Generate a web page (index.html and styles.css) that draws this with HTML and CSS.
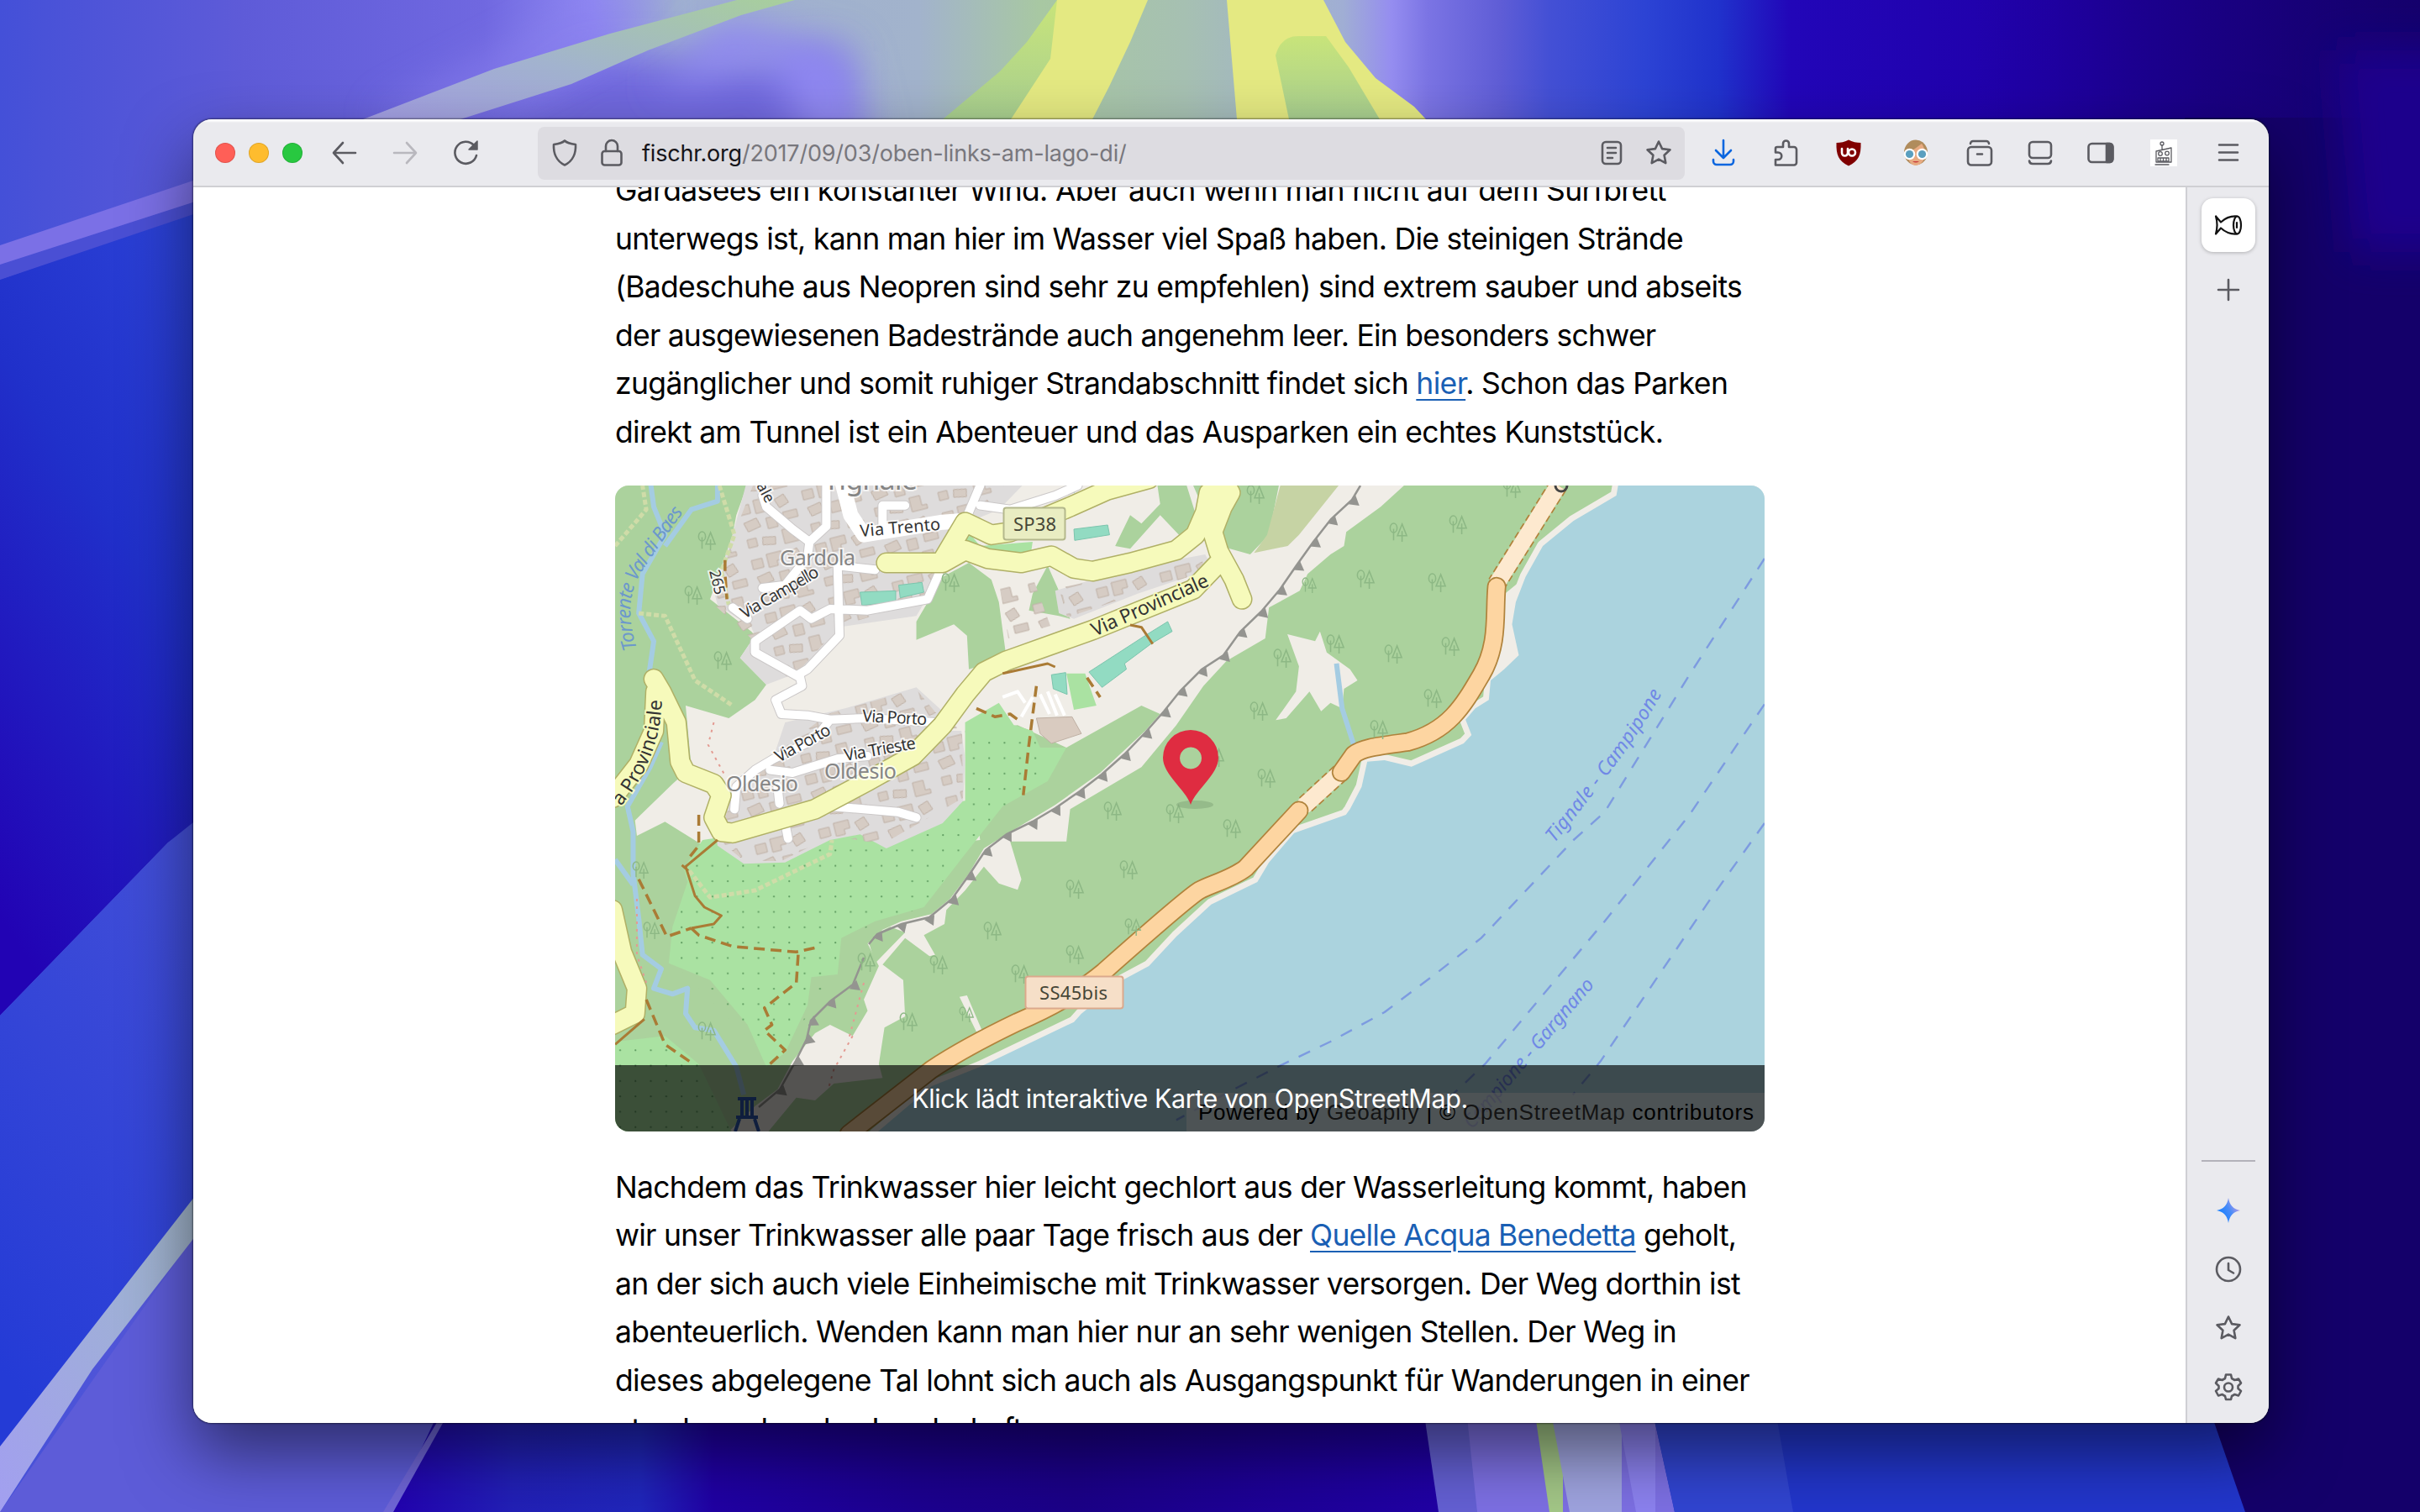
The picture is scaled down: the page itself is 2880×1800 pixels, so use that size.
FILE: index.html
```html
<!DOCTYPE html>
<html lang="de">
<head>
<meta charset="utf-8">
<title>Oben links am Lago di Garda</title>
<link rel="stylesheet" href="styles.css">
</head>
<body>
<svg class="wallpaper" viewBox="0 0 2880 1800" aria-hidden="true">
  <defs>
    <linearGradient id="wTop" x1="0" x2="2880" y1="0" y2="0" gradientUnits="userSpaceOnUse">
      <stop offset="0" stop-color="#4450d8"/><stop offset=".1" stop-color="#5e5bd8"/><stop offset=".2" stop-color="#7068e0"/><stop offset=".245" stop-color="#8f88f2"/><stop offset=".28" stop-color="#9fb0d0"/><stop offset=".38" stop-color="#a2b3cc"/><stop offset=".43" stop-color="#a8c8a2"/><stop offset=".49" stop-color="#a6c0b2"/><stop offset=".555" stop-color="#a0aed4"/><stop offset=".575" stop-color="#958df0"/><stop offset=".59" stop-color="#7b74e4"/><stop offset=".62" stop-color="#5f5dd6"/><stop offset=".64" stop-color="#4450d5"/><stop offset=".68" stop-color="#2c43d4"/><stop offset=".71" stop-color="#2032cc"/><stop offset=".74" stop-color="#2206b8"/><stop offset=".85" stop-color="#2000a8"/><stop offset="1" stop-color="#180078"/>
    </linearGradient>
    <linearGradient id="wRight" x1="0" x2="1" y1="0" y2="0"><stop offset="0" stop-color="#16006c" stop-opacity="0"/><stop offset=".7" stop-color="#14006a" stop-opacity=".9"/><stop offset="1" stop-color="#120064"/></linearGradient>
    <linearGradient id="wBlue" x1=".7" y1="0" x2=".3" y2="1"><stop offset="0" stop-color="#2b41d6"/><stop offset=".4" stop-color="#2030ca"/><stop offset="1" stop-color="#2203b4"/></linearGradient>
    <linearGradient id="wBlue2" x1=".7" y1="0" x2=".3" y2="1"><stop offset="0" stop-color="#434fd8"/><stop offset="1" stop-color="#243bd6"/></linearGradient>
    <linearGradient id="wRay" x1="0" y1="1" x2="1" y2="0"><stop offset="0" stop-color="#a49fe6"/><stop offset=".45" stop-color="#a2b3ce"/><stop offset="1" stop-color="#a8cf9c"/></linearGradient>
    <linearGradient id="wStripe" x1="0" y1="1" x2="1" y2="0"><stop offset="0" stop-color="#a29ff0"/><stop offset=".6" stop-color="#9fb0d6"/><stop offset="1" stop-color="#a0b5c4"/></linearGradient>
    <linearGradient id="wDark" x1="460" x2="1720" y1="0" y2="0" gradientUnits="userSpaceOnUse"><stop offset="0" stop-color="#2200b0"/><stop offset=".12" stop-color="#2220b8"/><stop offset=".24" stop-color="#2026bc"/><stop offset=".31" stop-color="#2000a4"/><stop offset=".5" stop-color="#1c0090"/><stop offset=".65" stop-color="#1b0088"/><stop offset="1" stop-color="#2000a6"/></linearGradient>
    <linearGradient id="wGreen" x1="0" x2="0" y1="0" y2="1"><stop offset="0" stop-color="#c8e47a"/><stop offset="1" stop-color="#a8cf90"/></linearGradient>
    <filter id="soft" x="-30%" y="-60%" width="160%" height="220%"><feGaussianBlur stdDeviation="24"/></filter>
  </defs>
  <rect width="2880" height="1800" fill="url(#wTop)"/>
  <path filter="url(#soft)" fill="#7068de" d="M560 180L700 70 960 70 1000 60 1000 220 560 220z"/>
  <path filter="url(#soft)" fill="#9088f2" d="M860 20L1010 60 1040 180 960 180 920 70 780 110z"/>
  <path filter="url(#soft)" fill="#8a80ee" opacity=".7" d="M440 142L700 10 800 0 700 60 520 142z"/>
  <rect x="2350" y="0" width="530" height="150" fill="url(#wRight)" opacity=".6"/>
  <rect x="2600" y="140" width="280" height="1660" fill="#14006a"/>
  <path filter="url(#soft)" fill="#1c008c" d="M2780 60H2960V300H2800z"/>
  <path fill="#2438cf" d="M0 333L260 243V1000H0z"/>
  <path fill="url(#wBlue)" d="M0 333L260 243V960L200 1003 0 1209z"/>
  <path fill="#4a4fd4" d="M0 315L260 231V245L0 333z"/>
  <path fill="#7b70e6" d="M0 292L260 205V231L0 315z"/>
  <path fill="url(#wBlue2)" d="M0 1209L200 1003 260 955V1400L0 1722z"/>
  <path fill="#5d5cd8" d="M0 1800L260 1430 560 1600 527 1693 466 1800z"/>
  <path fill="url(#wStripe)" d="M0 1722L260 1388V1436L110 1630 0 1800z"/>
  <path fill="url(#wDark)" d="M560 1600H1720V1800H466z"/>
  <path fill="#6f66d8" d="M540 1660H546L468 1800H456z"/>
  <path fill="#6460d4" d="M1690 1650H2000V1800H1712z"/>
  <path fill="#7d70e4" d="M1742 1650H2000V1800H1758z"/>
  <path fill="#a4c888" d="M1822 1650H1860V1800H1844z"/>
  <path fill="#9fa4e0" d="M1840 1650H1930V1800H1868z"/>
  <path fill="#8c82f0" d="M1919 1650H1970V1800H1947z"/>
  <path fill="#2236cc" d="M1960 1650H2620L2672 1800H1993z"/>
  <path fill="#3145d2" d="M1960 1650H2108L2134 1800H1993z"/>
  <path fill="url(#wRay)" d="M877 0H946L882 18 771 60 680 100 548 142H432L588 82 726 40z"/>
  <path fill="url(#wGreen)" d="M1258 0L1222 50 1190 85 1122 142H1240L1290 0z"/>
  <path fill="#e4e982" d="M1258 0H1366L1345 50 1320 103 1300 142H1203L1250 70z"/>
  <path fill="#e4e982" d="M1460 0H1575L1601 50 1637 93 1683 127 1697 142H1472z"/>
  <path fill="url(#wGreen)" d="M1518 66Q1524 43 1545 43H1578L1605 80 1642 142H1534z"/>
</svg>

<main class="window">
  <header class="toolbar">
    <div class="lights"><i class="red"></i><i class="amber"></i><i class="green"></i></div>
    <svg class="icon" viewBox="0 0 32 32"><path d="M29 16H3M14 4L3 16l11 12"/></svg>
    <svg class="icon faded" viewBox="0 0 32 32"><path d="M3 16h26M18 4l11 12-11 12"/></svg>
    <svg class="icon" viewBox="0 0 32 32"><path d="M28 19A13 13 0 1 1 25 7"/><path class="solid" stroke-width="1.500" d="M29 2v10H19z"/></svg>
    <div class="address">
      <svg class="icon" viewBox="0 0 32 32"><path d="M16 1.500C13 4.500 7 5.500 3 6c-.5 10 3 20 13 24.500C26 26 29.500 16 29 6 25 5.500 19 4.500 16 1.500z"/></svg>
      <svg class="icon" viewBox="0 0 32 32"><rect x="4.500" y="14" width="23" height="16.500" rx="3"/><path d="M9 14V8a7 7 0 0 1 14 0v6"/></svg>
      <span class="url"><b>fischr.org</b>/2017/09/03/oben-links-am-lago-di/</span>
      <svg class="icon reader" viewBox="0 0 32 32"><rect x="5" y="3" width="22" height="26" rx="4"/><path d="M11 10h10M11 16h10M11 22h6"/></svg>
      <svg class="icon" viewBox="0 0 32 32"><path d="M16 2.500l4.100 8.600 9.400 1.200-6.900 6.500 1.700 9.300L16 23.600l-8.300 4.500 1.700-9.300-6.900-6.500 9.400-1.200z"/></svg>
    </div>
    <svg class="icon blue" viewBox="0 0 32 32"><path d="M16 1v20M7 13l9 9 9-9M4 24v2a4 4 0 0 0 4 4h16a4 4 0 0 0 4-4v-2"/></svg>
    <svg class="icon" viewBox="0 0 32 32"><path d="M4 30.500V24h3a4 4 0 0 0 0-8.500H4V11a2 2 0 0 1 2-2h7V5a3.500 3.500 0 0 1 7 0v4h6a3 3 0 0 1 3 3v15.500a3 3 0 0 1-3 3z"/></svg>
    <svg class="icon" viewBox="0 0 32 32"><path fill="#800000" stroke="none" d="M16 .5C12 3 6 4 1.500 4 1 18 4 26 16 31.500 28 26 31 18 30.500 4 26 4 20 3 16 .5z"/><path stroke="#fff" stroke-width="2.600" d="M8 11v5a3.500 3.500 0 0 0 7 0v-5"/><circle cx="20" cy="15.500" r="4" stroke="#fff" stroke-width="2.600"/></svg>
    <svg class="icon" viewBox="0 0 32 32"><g stroke="none"><ellipse cx="16" cy="15.500" rx="14" ry="15" fill="#b08c5c"/><path fill="#e8ab82" d="M6 16Q16 11 23 5q4 5 3.500 13c0 8-5 13-10.500 13S6 25 6 16z"/><circle cx="8.500" cy="17.500" r="6.800" fill="#fff"/><circle cx="23.500" cy="17.500" r="6.800" fill="#fff"/><circle cx="8.500" cy="17.500" r="4.600" fill="#5a9fbf"/><circle cx="23.500" cy="17.500" r="4.600" fill="#5a9fbf"/><path fill="#c83c3c" d="M12 26h8q-4 3-8 0z"/></g></svg>
    <svg class="icon" viewBox="0 0 32 32"><rect x="2" y="9" width="28" height="21.500" rx="4"/><path d="M5 5a3 3 0 0 1 3-3h16a3 3 0 0 1 3 3M13 17.500h6"/></svg>
    <svg class="icon" viewBox="0 0 32 32"><rect x="3" y="3" width="26" height="19" rx="4"/><path d="M3 25.500a4 4 0 0 0 4 3.500h18a4 4 0 0 0 4-3.500"/></svg>
    <svg class="icon" viewBox="0 0 32 32"><rect x="1.500" y="5" width="29" height="22" rx="4"/><path class="solid" d="M23 5h4a3 3 0 0 1 3 3v16a3 3 0 0 1-3 3h-4z"/></svg>
    <svg class="icon" viewBox="0 0 32 32"><rect width="32" height="32" fill="#fff" stroke="none"/><g stroke-width="1.300"><circle cx="14" cy="5" r="2"/><path d="M14 7v5M7 14l18-4v17H7zM6 30h16"/><circle cx="12" cy="17" r="2.300"/><circle cx="20" cy="16.500" r="2.300"/><path d="M9 22h13v4H9zM12 22v4M15.500 22v4M19 22v4"/></g></svg>
    <svg class="icon" viewBox="0 0 32 32"><path d="M5 6.500h22M5 15.500h22M5 24.500h22"/></svg>
  </header>

  <div class="body">
    <article class="page">
      <div class="column">
        <p class="intro"><span class="l1">Gardasees ein konstanter Wind. Aber auch wenn man nicht auf dem Surfbrett</span><br>
          <span class="l2">unterwegs ist, kann man hier im Wasser viel Spaß haben. Die steinigen Strände</span><br>
          <span class="l3">(Badeschuhe aus Neopren sind sehr zu empfehlen) sind extrem sauber und abseits</span><br>
          <span class="l4">der ausgewiesenen Badestrände auch angenehm leer. Ein besonders schwer</span><br>
          <span class="l5">zugänglicher und somit ruhiger Strandabschnitt findet sich <a>hier</a>. Schon das Parken</span><br>
          <span class="l6">direkt am Tunnel ist ein Abenteuer und das Ausparken ein echtes Kunststück.</span></p>

        <figure class="map">
          <svg viewBox="732 578 1368 769">
            <defs>
              <pattern id="houses" width="78" height="66" patternUnits="userSpaceOnUse" patternTransform="rotate(-14)">
                <g fill="#d6ccc4" stroke="#bfb1a6" stroke-width="1">
                  <path d="M4 6h13v11H4zM23 3h18v10h-7v6H23zM48 8l12-4 4 11-12 4zM6 27l16-3 3 11-16 3zM33 27h12v13H33zM54 25h17v9H54zM5 47h11v10H5zM24 48l15 3-2 9-15-3zM48 45h13v12h6v5H48z"/>
                </g>
              </pattern>
              <symbol id="trees" viewBox="0 0 24 26" overflow="visible"><g fill="none" stroke="#8db885" stroke-width="1.700"><ellipse cx="6" cy="7" rx="4.500" ry="6"/><path d="M6 8v15M17 2l-6 15h12zM17 11v14"/></g></symbol>
              <pattern id="dots" width="18.300" height="18.300" patternUnits="userSpaceOnUse"><circle cx="6" cy="6" r="1.100" fill="#5f9c60"/></pattern>
              <marker id="tooth" markerUnits="userSpaceOnUse" markerWidth="18" markerHeight="18" refX="7" refY="0" orient="auto" viewBox="0 -8 16 16" overflow="visible"><path d="M1 0L13 0 7 -10z" fill="#949490"/></marker>
            </defs>
            <g class="geo" transform="translate(720 570) scale(.44643 .33333)">
              <path fill="#f0ede7" d="M0 0H3100V2340H0z"/>
              <path class="wood" d="M0 0H385L350 130 340 200 310 320 280 430 390 545 400 560 360 640 430 735 400 790 330 855 215 810 230 1030 180 1090 80 1220 85 1275 160 1225 250 1300 380 1380 1000 1290 960 900 1100 880 1230 960 1430 810 1480 840 1440 900 1320 1050 1200 1165 1070 1270 1010 1320 970 1410 920 1500 870 1555 790 1580 740 1610 700 1660 730 1740 690 1860 700 1900 660 1990 600 1950 560 1980 500 2080 460 2180 400 2240 330 2331H0z"/>
              <path class="wood" d="M2130 24L2068 100 1976 190 1970 240 1934 270 1873 340 1852 400 1770 460 1760 570 1657 650 1595 740 1523 880 1430 1030 1240 1180 1230 1295 1080 1295 1110 1430 1100 1468 1050 1445 1010 1385 960 1470 910 1540 905 1590 850 1630 880 1700 865 1705 800 1640 740 1735 795 1790 800 1920 745 1960 730 2090 740 2140 610 2160 560 2220 510 2210 430 2340H2000L3000 0z"/>
              <path class="wood" d="M700 1640L760 1600 800 1620 720 1730zM830 575V510L900 350 970 300 1030 360 1050 440 1070 640 970 680 965 560 930 520zM1180 310L1210 400 1240 500 1210 490 1130 470 1140 410zM1470 0H1545L1580 150 1530 200 1480 130 1400 250 1360 240 1400 130 1430 160 1480 90zM1560 0H1800L1770 200 1720 270 1640 240z"/>
              <path fill="#c6d3a4" d="M1805 0H1970L1850 200 1820 240 1730 265 1765 200z"/>
              <path class="meadow" d="M1819 555L1893 580 1906 545 1924 620 1986 680 2006 720 1970 750 1965 820 1934 800 1909 830 1878 760 1816 855 1788 862 1842 760 1850 670zM945 1850L965 1845 1005 1970 990 1975z"/>
              <path class="orchard" d="M960 870L1050 800 1090 880 1140 900 1160 960 1230 960 1180 1080 1060 1170 960 1340 850 1530 720 1580 630 1640 620 1770 550 1780 540 1880 480 2050 430 2100 380 1950 280 1790 170 1730 180 1600 220 1440 210 1390 260 1290 960 1150z"/>
              <path class="orchard" d="M27 2010L160 1990 250 2090 340 2340H27z"/>
            </g>
            <g fill="url(#dots)">
              <path d="M1150 870H1230L1240 925 1200 960 1150 1010 1100 1080 1040 1100 1000 1120 990 1165 940 1240 900 1245 800 1145 802 1110 825 1030 1000 1000 1148 950z"/>
              <path d="M732 1240H790L830 1265 870 1347H732z"/>
            </g>
            <g class="geo" transform="translate(720 570) scale(.44643 .33333)">
              <path class="town" d="M380 0H1130L1050 110 960 160 900 290 870 400 830 490 620 530 610 600 500 700 430 735 360 640 400 560 390 530 300 450 290 400 340 200z"/>
              <path class="town" d="M830 745L900 830 880 900 950 900 960 1000 955 1150 900 1230 750 1320 680 1270 600 1290 480 1370 370 1375 300 1310 290 1200 340 1100 450 990 480 870 640 820z"/>
              <path class="town" d="M1200 400L1400 320 1600 270 1620 320 1420 410 1250 500 1210 480z"/>
            </g>
            <g fill="url(#houses)">
              <path d="M896 578H1200L1150 620 1120 665 1100 715 1000 745 940 810 905 770 850 720 872 640z"/>
              <path d="M985 850L1090 820 1115 850 1145 870 1146 950 1050 1005 990 995 930 1025 886 1025 855 1000 875 935 920 900z"/>
              <path d="M1260 700L1430 665 1435 680 1350 708 1270 735z"/>
              <path d="M1190 700L1230 690 1250 745 1200 760z"/>
            </g>
            <g class="geo" transform="translate(720 570) scale(.44643 .33333)">
              <path class="orchard" d="M1230 695H1280L1310 810 1250 825z"/>
              <path class="pitch" d="M680 405L775 400V440L685 452zM783 380L845 370 850 405 787 425zM1250 180L1340 165 1345 200 1252 220zM1290 690L1440 560 1500 510 1512 545 1455 590 1385 660 1390 680 1325 745zM1190 700L1228 692 1232 770 1195 750zM1240 30L1270 20 1250 50z"/>
              <path fill="#d9cbc0" stroke="#bfb0a4" d="M1150 855L1245 850 1270 910 1190 945 1160 910z"/>
              <path class="parking" d="M1160 770L1185 840M1180 760L1205 845M1140 780L1110 850M1200 770L1225 845M1060 780L1100 760 1120 800"/>
              <path class="orchard" d="M940 240L975 200 1000 240 1140 225 1135 270 1020 272z"/>
              <path class="river" d="M120 0L130 100 160 200 100 340 90 480 130 580 118 690M300 24L300 80 230 110 160 240M150 940L120 1030 60 1170 75 1260 75 1410 90 1570 100 1700 150 1750 130 1820 180 1840 220 1820 215 1910 240 1960 290 1970 350 2100 370 2200M27 1360L75 1450"/>
              <path class="river" d="M1950 660L1965 820 1996 950"/>
              <path class="lane-edge" d="M90 480L160 490 240 720 340 810M225 1400L280 1495 400 1470 600 1340 605 1290M27 240L110 110 100 24"/>
              <path class="lane-edge" d="M305 24L345 200 310 330 330 450"/>
              <path class="white-edge" d="M420 60L430 100 500 180 545 225 590 170 590 24M545 225L540 280 480 380 420 390M740 190V95H800M1000 24L960 150M1000 95L1080 110 1200 60 1260 24M620 310L720 325M620 310L625 560 540 680 515 700M340 460L380 500M520 470L400 580V620L520 710 525 740 455 790 470 840 540 845 600 860 700 855 880 870M600 860L560 930 450 1000 400 1040 350 1100 345 1180M520 470L550 500 600 465 700 470 860 430 890 340M440 1040L500 1050 620 1000 700 990M460 1100L465 1160M480 1230L488 1285M600 1170L780 1190 830 1210"/>
              <path class="white-road" d="M420 60L430 100 500 180 545 225 590 170 590 24M545 225L540 280 480 380 420 390M740 190V95H800M1000 24L960 150M1000 95L1080 110 1200 60 1260 24M620 310L720 325M620 310L625 560 540 680 515 700M340 460L380 500M520 470L400 580V620L520 710 525 740 455 790 470 840 540 845 600 860 700 855 880 870M600 860L560 930 450 1000 400 1040 350 1100 345 1180M520 470L550 500 600 465 700 470 860 430 890 340M440 1040L500 1050 620 1000 700 990M460 1100L465 1160M480 1230L488 1285M600 1170L780 1190 830 1210"/>
              <path class="white-road wide" d="M630 0L655 130 690 200 900 155 950 150"/>
              <path class="y-edge" d="M130 715L150 760 190 870 200 1010 215 1050 290 1090 310 1130 290 1210 310 1260 340 1265 560 1180 700 1080 820 990 900 880 960 770 1010 690 1070 650 1300 540 1568 395 1636 300M750 300L900 300 960 255 1020 285 1110 300 1190 275 1250 320 1300 330 1400 300 1523 255 1574 200 1600 120 1610 50 1650 10 1667 50 1646 100 1620 190 1636 260 1677 360 1698 430M900 290L960 155 1030 200 1080 190 1240 100 1340 40 1450 0M135 760L130 900 90 1020 20 1140M20 1540L45 1690 85 1820 80 1910 20 1950"/>
              <path class="y-road" d="M130 715L150 760 190 870 200 1010 215 1050 290 1090 310 1130 290 1210 310 1260 340 1265 560 1180 700 1080 820 990 900 880 960 770 1010 690 1070 650 1300 540 1568 395 1636 300M750 300L900 300 960 255 1020 285 1110 300 1190 275 1250 320 1300 330 1400 300 1523 255 1574 200 1600 120 1610 50 1650 10 1667 50 1646 100 1620 190 1636 260 1677 360 1698 430M900 290L960 155 1030 200 1080 190 1240 100 1340 40 1450 0M135 760L130 900 90 1020 20 1140M20 1540L45 1690 85 1820 80 1910 20 1950"/>
              <path class="track" d="M300 1290L215 1385 240 1490 265 1530 310 1560 290 1590 230 1605M205 1380L222 1400M1060 695L1180 660 1200 672M1400 522L1430 530 1460 590M105 1930L27 2020"/>
              <path class="track dashed" d="M230 1605L250 1630 340 1670 510 1690 560 1675M515 1700L510 1800 425 1890 445 1950 425 1970 480 2040 440 2090M90 1430L165 1635 230 1605M250 1200L250 1310 220 1360M110 1860L160 2020 230 2085M1150 740L1130 950 1115 1130M320 290V340L325 430M990 820L1040 850 1080 840 1110 870M1285 710L1320 780"/>
              <path class="red-dots" d="M290 870L275 950 320 1060M660 1990L610 2110 595 2180M85 1500V1700L110 1800M690 1800L650 2000"/>
              <path class="shore" d="M2704 0L2696 60 2582 150 2500 240 2454 350 2428 440 2418 520 2436 630 2397 680 2361 720 2356 790 2320 820 2294 860 2310 915 2289 945 2150 1028 2078 1005 2032 1010 2017 1100 1986 1180 1975 1200 1837 1265 1770 1370 1739 1440 1616 1520 1523 1635 1450 1740 1380 1790 1270 1910 1250 1940 1000 2100 870 2170 720 2340H3110V0z"/>
              <path fill="#f0ede7" d="M2454 350L2390 420 2375 640 2340 720 2361 720 2397 680 2436 630 2418 520z"/>
              <path fill="#abd3de" d="M2704 0L2696 60 2582 150 2500 240 2454 350 2428 440 2418 520 2436 630 2397 680 2361 720 2356 790 2320 820 2294 860 2310 915 2289 945 2150 1028 2078 1005 2032 1010 2017 1100 1986 1180 1975 1200 1837 1265 1770 1370 1739 1440 1616 1520 1523 1635 1450 1740 1380 1790 1270 1910 1250 1940 1000 2100 870 2170 720 2340H3110V0z"/>
              <path class="o-edge dashed" d="M2541 24L2377 375M1960 1050L1862 1170"/>
              <path class="tunnel" d="M2541 24L2377 375M1960 1050L1862 1170"/>
              <path class="o-edge" d="M2377 385C2370 480 2384 590 2336 700S2250 900 2140 940C2060 955 2020 960 1996 985L1963 1048M1850 1185L1708 1390C1670 1430 1610 1450 1585 1470S1490 1570 1330 1760Q1240 1860 1100 1940 960 2030 870 2110L650 2340"/>
              <path class="o-road" d="M2377 385C2370 480 2384 590 2336 700S2250 900 2140 940C2060 955 2020 960 1996 985L1963 1048M1850 1185L1708 1390C1670 1430 1610 1450 1585 1470S1490 1570 1330 1760Q1240 1860 1100 1940 960 2030 870 2110L650 2340"/>
              <path class="ferry" d="M3091 285L2891 700 2665 1190 2582 1290 2336 1640 2222 1760 2078 1905 1934 2010 1801 2095 1677 2180 1523 2290M3091 805L2891 1200 2665 1580 2346 2090 2243 2220M3091 1230L2942 1510 2654 2080 2580 2200"/>
            </g>
            <circle cx="1858" cy="578" r="7" fill="none" stroke="#444" stroke-width="3"/>
            <g class="cliff">
              <polyline points="1619,578 1609,595 1584,618 1563,645 1543,673 1523,702 1501,728 1476,752 1456,780 1430,797 1405,822 1385,847 1363,872 1338,898 1311,922 1285,942 1256,962 1229,978 1198,993 1173,1012 1153,1042 1133,1070 1106,1092 1073,1100 1044,1112 1034,1124"/>
              <polyline points="1028,1140 1015,1172 988,1192 965,1215 960,1237 947,1263 928,1297 903,1318"/>
            </g>
            <g class="trees">
              <use href="#trees" x="1483" y="577" width="22" height="24"/><use href="#trees" x="1653" y="622" width="22" height="24"/><use href="#trees" x="1724" y="613" width="22" height="24"/><use href="#trees" x="1614" y="678" width="22" height="24"/><use href="#trees" x="1699" y="682" width="22" height="24"/><use href="#trees" x="1549" y="685" width="18" height="24"/><use href="#trees" x="1578" y="755" width="22" height="24"/><use href="#trees" x="1515" y="772" width="22" height="24"/><use href="#trees" x="1647" y="767" width="22" height="24"/><use href="#trees" x="1715" y="758" width="22" height="24"/><use href="#trees" x="1694" y="820" width="22" height="24"/><use href="#trees" x="1487" y="835" width="22" height="24"/><use href="#trees" x="1630" y="857" width="22" height="24"/><use href="#trees" x="1496" y="915" width="22" height="24"/><use href="#trees" x="1788" y="570" width="22" height="24"/>
              <use href="#trees" x="830" y="632" width="22" height="24"/><use href="#trees" x="814" y="697" width="22" height="24"/><use href="#trees" x="849" y="775" width="22" height="24"/><use href="#trees" x="1120" y="682" width="22" height="24"/><use href="#trees" x="1435" y="890" width="22" height="24"/>
              <use href="#trees" x="1332" y="1024" width="22" height="24"/><use href="#trees" x="1268" y="1047" width="22" height="24"/><use href="#trees" x="1338" y="1092" width="20" height="24"/><use href="#trees" x="1170" y="1097" width="22" height="24"/><use href="#trees" x="1268" y="1125" width="22" height="24"/><use href="#trees" x="1106" y="1137" width="22" height="24"/><use href="#trees" x="1203" y="1148" width="22" height="24"/><use href="#trees" x="1020" y="1134" width="22" height="24"/><use href="#trees" x="1070" y="1205" width="22" height="24"/><use href="#trees" x="1141" y="1196" width="18" height="24"/><use href="#trees" x="830" y="1216" width="22" height="24"/><use href="#trees" x="752" y="1024" width="20" height="24"/><use href="#trees" x="765" y="1096" width="20" height="24"/><use href="#trees" x="1387" y="957" width="22" height="24"/><use href="#trees" x="1313" y="954" width="22" height="24"/><use href="#trees" x="1455" y="975" width="22" height="24"/>
            </g>
            <g class="road-label">
              <text transform="translate(1024 639) rotate(-5)" textLength="96">Via Trento</text>
              <text transform="translate(886 737) rotate(-30)" textLength="104">Via Campello</text>
              <text class="small" transform="translate(844 680) rotate(76)" textLength="30">265</text>
              <text class="small" transform="translate(900 578) rotate(62)">ale</text>
              <text transform="translate(1303 758) rotate(-24)" class="big" textLength="150">Via Provinciale</text>
              <text transform="translate(1026 859) rotate(3)" textLength="77">Via Porto</text>
              <text transform="translate(927 908) rotate(-29)" textLength="72">Via Porto</text>
              <text transform="translate(1006 906) rotate(-10)" textLength="86">Via Trieste</text>
              <path id="leftRoad" d="M739 960Q788 900 788 826" fill="none" stroke="none"/>
              <text class="big"><textPath href="#leftRoad" textLength="138">a Provinciale</textPath></text>
            </g>
            <g class="town-label">
              <text x="928" y="673" textLength="90">Gardola</text>
              <text x="864" y="942" textLength="86">Oldesio</text>
              <text x="981" y="927" textLength="86">Oldesio</text>
              <text x="980" y="583" class="village" textLength="112">Tignale</text>
            </g>
            <g class="water-label">
              <path id="creek" d="M758 772Q740 716 764 680T818 603" fill="none"/>
              <text class="stream"><textPath href="#creek" textLength="182">Torrente Val di Baes</textPath></text>
              <path id="ferryA" d="M1850 1004Q1893 950 1923 910T1979 824" fill="none"/>
              <text><textPath href="#ferryA" textLength="220">Tignale - Campipone</textPath></text>
              <path id="ferryB" d="M1752 1345L1902 1168" fill="none"/>
              <text><textPath href="#ferryB" textLength="226">Campione - Gargnano</textPath></text>
            </g>
            <rect x="1194.500" y="604.500" width="73" height="38" rx="3" fill="#e9edc2" stroke="#b4b88c" stroke-width="2"/>
            <text class="shield" x="1206" y="632" textLength="51">SP38</text>
            <rect x="1220.500" y="1162.500" width="116" height="38" rx="3" fill="#f6dfc8" stroke="#dba98c" stroke-width="2"/>
            <text class="shield" x="1237" y="1190" textLength="81">SS45bis</text>
            <path d="M878 1308h22M883 1308v22M889 1308v22M895 1308v22M876 1330h26M880 1332l-5 15M898 1332l5 15" stroke="#2b57b0" stroke-width="4" fill="none"/>
            <ellipse cx="1422" cy="958" rx="22" ry="5" fill="#7fa378" opacity=".5"/>
            <path fill="#df2c41" fill-rule="evenodd" d="M1417 958C1411 940 1384 922 1384 902a33 33 0 0 1 66 0C1450 922 1423 940 1417 958zM1417 889.500a13 13 0 1 0 .1 0z"/>
            <rect x="1412" y="1301" width="688" height="46" fill="#fff" opacity=".6"/>
            <text class="credit" x="1426" y="1333" textLength="661">Powered by <tspan>Geoapify</tspan> | © <tspan>OpenStreetMap</tspan> contributors</text>
          </svg>
          <figcaption>Klick lädt interaktive Karte von OpenStreetMap.</figcaption>
        </figure>

        <p class="outro"><span class="l7">Nachdem das Trinkwasser hier leicht gechlort aus der Wasserleitung kommt, haben</span><br>
          <span class="l8">wir unser Trinkwasser alle paar Tage frisch aus der <a>Quelle Acqua Benedetta</a> geholt,</span><br>
          <span class="l9">an der sich auch viele Einheimische mit Trinkwasser versorgen. Der Weg dorthin ist</span><br>
          <span class="l10">abenteuerlich. Wenden kann man hier nur an sehr wenigen Stellen. Der Weg in</span><br>
          <span class="l11">dieses abgelegene Tal lohnt sich auch als Ausgangspunkt für Wanderungen in einer</span><br>
          <span class="l12">atemberaubenden Landschaft.</span></p>
      </div>
    </article>

    <aside class="sidebar">
      <div class="tab"><svg class="icon" viewBox="0 0 32 32"><g stroke="#111" stroke-width="2.200"><path d="M1 5.500l6 7C13 7 19 5 26 5.500M1 26.500l6-7c6 5.500 12 7.500 19 7M1 5.500q3 10 0 21"/><ellipse cx="26.500" cy="16" rx="4.500" ry="10.500"/><path d="M26 13v6"/></g></svg></div>
      <svg class="icon plus" viewBox="0 0 32 32"><path d="M16 4v24M4 16h24"/></svg>
      <div class="tools">
        <svg class="icon" viewBox="0 0 32 32"><defs><linearGradient id="spark" x1="0" y1=".8" x2="1" y2=".2"><stop offset=".2" stop-color="#1a80ff"/><stop offset=".55" stop-color="#4a8cf8"/><stop offset="1" stop-color="#d8a0e0"/></linearGradient></defs><path fill="url(#spark)" stroke="none" d="M16 1q2 13 14 15-12 2-14 15-2-13-14-15 12-2 14-15z"/></svg>
        <svg class="icon" viewBox="0 0 32 32"><circle cx="16" cy="16" r="14"/><path d="M16 9v8l6 3.500"/></svg>
        <svg class="icon" viewBox="0 0 32 32"><path d="M16 2.500l4.100 8.600 9.400 1.200-6.900 6.500 1.700 9.300L16 23.600l-8.300 4.500 1.700-9.300-6.900-6.500 9.400-1.200z"/></svg>
        <svg class="icon" viewBox="0 0 32 32"><path d="M13 1.500h6l1 4.500 3.500 2 4.500-1.500 3 5-3.500 3.500v3l3.500 3-3 5.500-4.500-1.500-3.500 2-1 4h-6l-1-4-3.500-2L4 26.500 1 21l3.500-3v-3L1 11.500l3-5L8.500 8 12 6z"/><circle cx="16" cy="16.500" r="5"/></svg>
      </div>
    </aside>
  </div>
</main>
</body>
</html>
```
FILE: styles.css
```css
* { box-sizing: border-box; }
body { margin: 0; width: 2880px; height: 1800px; overflow: hidden; position: relative; background: #1a0080; font-family: Inter, "Liberation Sans", sans-serif; }
.wallpaper { position: absolute; inset: 0; width: 2880px; height: 1800px; }

.window { position: relative; margin: 142px 0 0 230px; width: 2470px; height: 1552px; display: flex; flex-direction: column; border-radius: 22px; overflow: hidden; background: #eaeaee; }
.window { box-shadow: 0 0 2px 1px rgba(0, 0, 0, .45), 0 36px 80px rgba(0, 0, 0, .5); }

.toolbar { height: 81px; flex: none; display: grid; align-items: center; justify-items: center; padding-top: 1px; border-bottom: 2px solid #cfcfd3; box-shadow: inset 0 3px 2px #fbfbfd;
  grid-template-columns: 142px 76px 68px 78px 46px 1365px 9px 74px 74px 75px 86px 66px 78px 66px 84px 70px; }
.lights { display: flex; gap: 16px; width: 105px; margin-left: 14px; }
.lights i { width: 24.500px; height: 24.500px; border-radius: 50%; box-shadow: inset 0 0 0 1px rgba(0, 0, 0, .12); }
.red { background: #ff5f57; }
.amber { background: #febc2e; }
.green { background: #28c840; }
.icon { width: 32px; height: 32px; flex: none; fill: none; stroke: #5b5b61; stroke-width: 2.600; stroke-linecap: round; stroke-linejoin: round; overflow: visible; }
.icon .solid { fill: #5b5b61; }
.faded { stroke: #b9b8be; }
.blue { stroke: #0a66df; }
.address { grid-column: 6; width: 1365px; height: 63px; display: flex; align-items: center; padding: 0 15px 0 16px; gap: 24px; border-radius: 8px; background: #dddce1; }
.toolbar > .address + .icon { grid-column: 8; }
.url { flex: 1; margin-left: -4px; padding-top: 1px; font-size: 27px; letter-spacing: -.2px; color: #78777d; white-space: nowrap; }
.url b { font-weight: 400; color: #15141a; }

.body { flex: 1; min-height: 0; display: flex; }
.page { flex: 1; overflow: hidden; background: #fff; border-right: 2px solid #cfcfd4; padding-left: 502px; }
.column { width: 1368px; }
p { font-size: 35.500px; line-height: 57.600px; white-space: nowrap; color: #000; letter-spacing: -.7px; }
.intro { margin: -25px 0 34px; }
.outro { margin: 38px 0; }
.l1, .l5, .l6 { letter-spacing: -.65px; }
.l4, .l8 { letter-spacing: -.77px; }
a { color: #1a5fb4; text-decoration: underline; text-decoration-thickness: 2px; text-underline-offset: 6px; }

.map { position: relative; margin: 0; height: 769px; border-radius: 16px; overflow: hidden; }
.map svg { display: block; width: 1368px; height: 769px; }
figcaption { position: absolute; inset: auto 0 0; height: 79px; line-height: 80px; text-align: center; color: #fff; background: rgba(0, 0, 0, .65); font-size: 30.500px; letter-spacing: -.43px; }

.geo path { vector-effect: non-scaling-stroke; stroke-linejoin: round; }
.wood { fill: #abd29d; }
.meadow { fill: #f0ede7; }
.orchard { fill: #aae2a2; }
.town { fill: #dedcdc; }
.pitch { fill: #92dbc2; stroke: #7cc4ad; }
.parking { fill: none; stroke: #fff; stroke-width: 4px; }
.river { fill: none; stroke: #a4cce2; stroke-width: 6px; }
.lane-edge { fill: none; stroke: #cfdca8; stroke-width: 5px; stroke-dasharray: 6 3; }
.white-edge { fill: none; stroke: #cbc8c8; stroke-width: 12px; stroke-linecap: round; }
.white-road { fill: none; stroke: #fff; stroke-width: 10px; stroke-linecap: round; }
.white-road.wide { stroke-width: 18px; }
.y-edge { fill: none; stroke: #b0b066; stroke-width: 25px; stroke-linecap: round; }
.y-road { fill: none; stroke: #f6fabb; stroke-width: 22px; stroke-linecap: round; }
.o-edge { fill: none; stroke: #b0833c; stroke-width: 23px; stroke-linecap: round; }
.o-edge.dashed { stroke-dasharray: 8 4; stroke-linecap: butt; }
.o-road { fill: none; stroke: #fdd5a1; stroke-width: 19.500px; stroke-linecap: round; }
.tunnel { fill: none; stroke: #fde9cf; stroke-width: 19.500px; }
.track { fill: none; stroke: #aa7b35; stroke-width: 3px; }
.track.dashed { stroke-width: 3.500px; stroke-dasharray: 13 7; }
.red-dots { fill: none; stroke: #e39b92; stroke-width: 2px; stroke-dasharray: 3 6; }
.shore { fill: none; stroke: #f0ede7; stroke-width: 14px; }
.ferry { fill: none; stroke: #7d9be0; stroke-width: 2.400px; stroke-dasharray: 15 13; }
.cliff polyline { fill: none; stroke: #949490; stroke-width: 2.500px; marker-mid: url(#tooth); }

.map text { font-family: "Noto Sans", "Open Sans", sans-serif; paint-order: stroke; }
.road-label text { font-size: 20px; fill: #333; stroke: rgba(255, 255, 255, .75); stroke-width: 4px; }
.road-label text.small { font-size: 18px; }
.road-label text.big { font-size: 23px; stroke: #f6fabb; }
.town-label text { font-size: 25px; fill: #858585; stroke: rgba(255, 255, 255, .7); stroke-width: 4px; }
.town-label text.village { font-size: 34px; }
.water-label text { font-size: 23px; font-style: italic; fill: #7088e6; }
.water-label text.stream { fill: #6c98cc; }
.map text.shield { font-size: 22px; fill: #464637; }
.map text.credit { font-family: "Liberation Sans", sans-serif; font-size: 26px; fill: #000; }
.credit tspan { fill: #3a3a3a; }

.sidebar { width: 97px; flex: none; display: flex; flex-direction: column; align-items: center; padding-top: 13px; background: #eaeaee; }
.tab { width: 64px; height: 64px; border-radius: 14px; display: grid; place-items: center; background: #fff; box-shadow: 0 1px 4px rgba(0, 0, 0, .25); }
.plus { margin-top: 29px; }
.tools { margin-top: auto; width: 64px; border-top: 2px solid #b3b2ba; padding: 42px 0 27px; display: flex; flex-direction: column; align-items: center; gap: 38px; }
```
